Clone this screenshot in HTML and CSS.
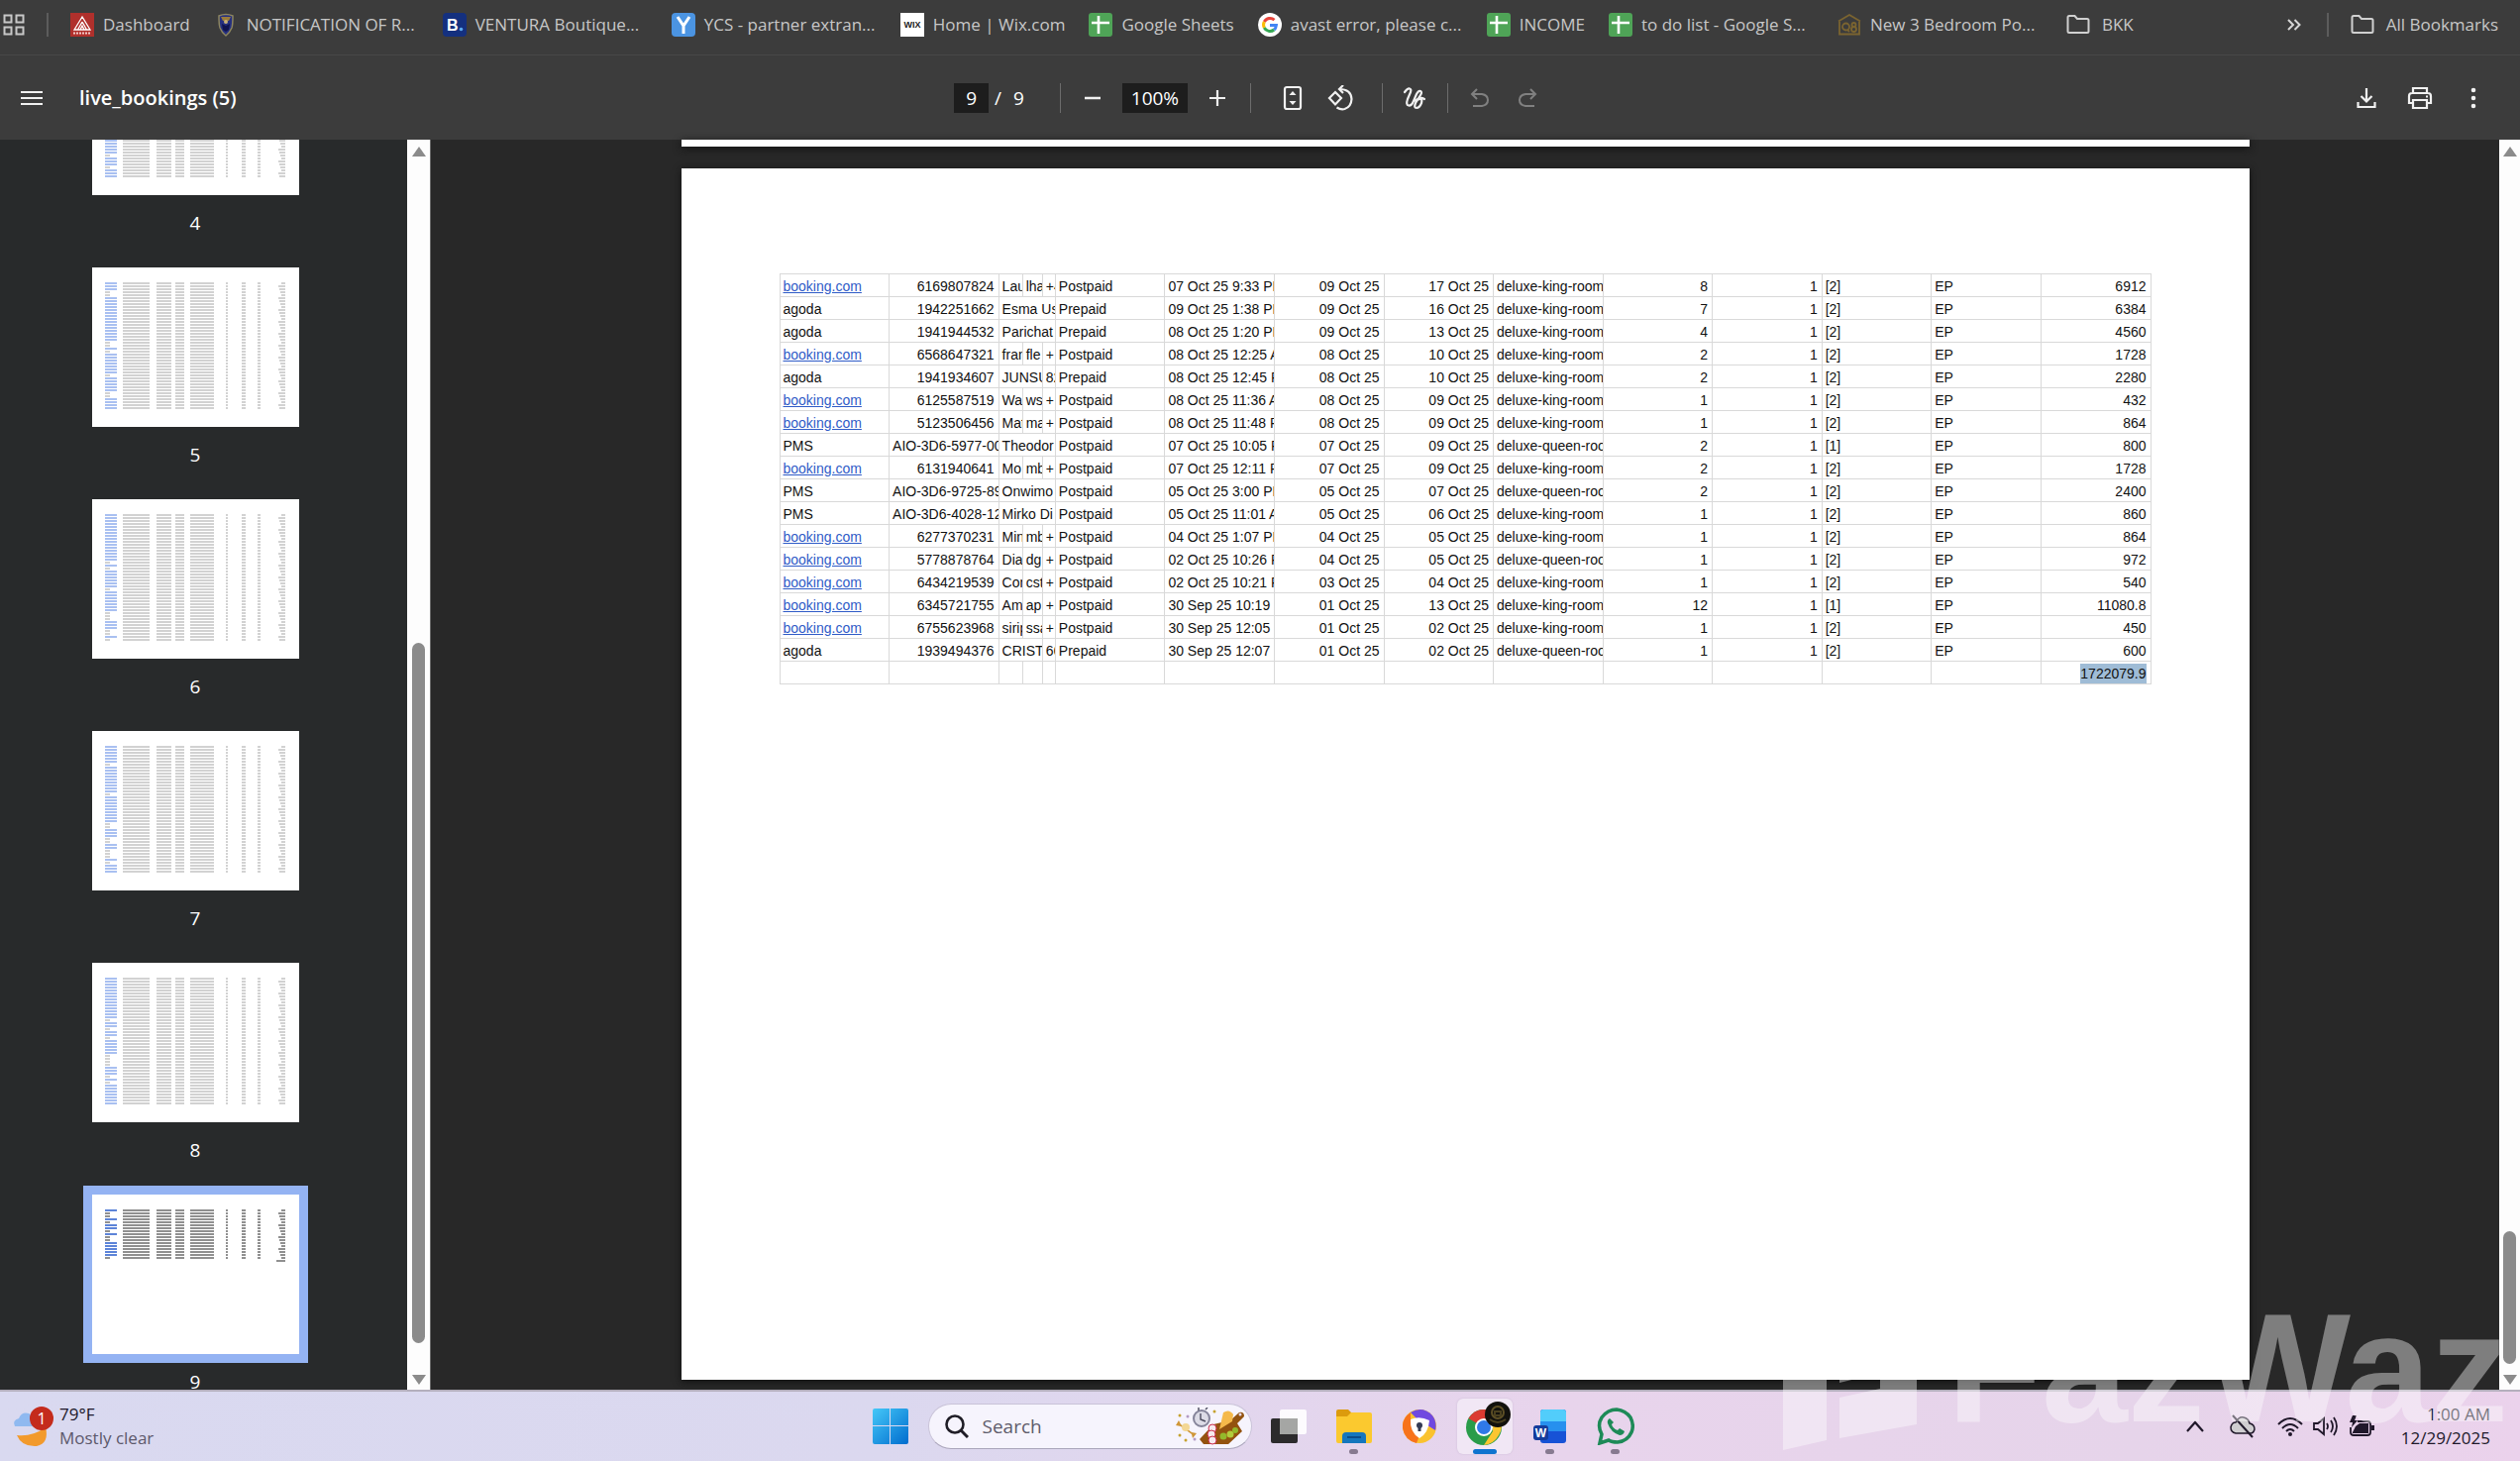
FILE: index.html
```html
<!DOCTYPE html>
<html lang="en">
<head>
    <meta charset="UTF-8">
    <meta name="viewport" content="width=device-width, initial-scale=1.0">
    <title>live_bookings (5)</title>
    <link rel="stylesheet" href="styles.css">
</head>
<body>
    <!-- shared icons -->
    <svg class="defs" aria-hidden="true">
        <symbol id="sheet" viewBox="0 0 24 24">
            <rect width="24" height="24" rx="3" fill="#4fa457"/>
            <path d="M3 10h18M10 3v18" stroke="#fff" stroke-width="2.6"/>
        </symbol>
        <symbol id="folder" viewBox="0 0 24 24">
            <path d="M1.500 18.500V4.500q0-1.500 1.500-1.500h5.500l2.500 3h10q1.500 0 1.500 1.500v11q0 1.500-1.500 1.500h-18q-1.500 0-1.500-1.500z" fill="none" stroke="#d0d0d0" stroke-width="2"/>
        </symbol>
    </svg>

    <nav class="bookmarks">
        <button class="icon-btn" aria-label="Apps">
            <svg width="22" height="24" viewBox="0 0 22 24"><path d="M1.500 2.500h7v7h-7zM13.500 2.500h7v7h-7zM1.500 14.500h7v7h-7zM13.500 14.500h7v7h-7z" fill="none" stroke="#c7c7c7" stroke-width="2"/></svg>
        </button>
        <span class="sep"></span>
        <div class="bookmark-list">
            <a href="#" class="bookmark">
                <svg width="24" height="24" viewBox="0 0 24 24"><rect width="24" height="24" fill="#b0302c"/><path d="M12 4L4 17h16zM12 9l-4.500 8M12 9l4.500 8M10 17l2-4 2 4" fill="none" stroke="#fff" stroke-width="1.300"/><path d="M3 20.500h18" stroke="#f3c9c7" stroke-width="2" stroke-dasharray="2 1"/></svg>
                <span>Dashboard</span>
            </a>
            <a href="#" class="bookmark wide">
                <svg width="24" height="24" viewBox="0 0 24 24"><path d="M5 3q7-3 14 0 0 9-1 12-2 5-6 8-4-3-6-8-1-3-1-12z" fill="#26307e" stroke="#8c8560" stroke-width="1.500"/><path d="M7 4h10l-2 4H9z" fill="#9a7b3c"/><path d="M8 11l4 2 4-2-1 6-3 2-3-2z" fill="#10144f"/><circle cx="12" cy="9" r="2" fill="#c8b27a"/></svg>
                <span>NOTIFICATION OF R...</span>
            </a>
            <a href="#" class="bookmark wide">
                <svg width="24" height="24" viewBox="0 0 24 24"><rect width="24" height="24" rx="4" fill="#14307f"/><text x="4" y="18" class="logo-b">B</text><circle cx="18.500" cy="16.500" r="1.800" fill="#5aa9ee"/></svg>
                <span>VENTURA Boutique...</span>
            </a>
            <a href="#" class="bookmark wide">
                <svg width="24" height="24" viewBox="0 0 24 24"><rect width="24" height="24" rx="4" fill="#4b94e2"/><path d="M6 4l6 9 6-9M12 13v8" fill="none" stroke="#fff" stroke-width="3"/></svg>
                <span>YCS - partner extran...</span>
            </a>
            <a href="#" class="bookmark">
                <svg width="24" height="24" viewBox="0 0 24 24"><rect width="24" height="24" fill="#fff"/><text x="12" y="15" text-anchor="middle" class="logo-wix">WIX</text></svg>
                <span>Home | Wix.com</span>
            </a>
            <a href="#" class="bookmark"><svg width="24" height="24"><use href="#sheet"/></svg><span>Google Sheets</span></a>
            <a href="#" class="bookmark wide">
                <svg width="24" height="24" viewBox="0 0 24 24" fill="none" stroke-width="3"><circle cx="12" cy="12" r="12" fill="#fff"/><path d="M16.500 7.200A6.500 6.500 0 0 0 6.300 9" stroke="#e8453c"/><path d="M6.300 9a6.500 6.500 0 0 0 0 6" stroke="#fbbc05"/><path d="M6.300 15a6.500 6.500 0 0 0 9.900 2" stroke="#34a853"/><path d="M16.200 17a6.500 6.500 0 0 0 2.200-4.500H12" stroke="#4285f4"/></svg>
                <span>avast error, please c...</span>
            </a>
            <a href="#" class="bookmark"><svg width="24" height="24"><use href="#sheet"/></svg><span>INCOME</span></a>
            <a href="#" class="bookmark wide"><svg width="24" height="24"><use href="#sheet"/></svg><span>to do list - Google S...</span></a>
            <a href="#" class="bookmark wide">
                <svg width="24" height="24" viewBox="0 0 24 24" fill="none" stroke="#7b6430" stroke-width="1.800"><path d="M1 8.500L12 2l11 6.500M2 9v12.500h20V9"/><circle cx="8.500" cy="14" r="3.500"/><path d="M10 17l2 2"/><circle cx="16.500" cy="12" r="2"/><circle cx="16.500" cy="16.500" r="2.500"/></svg>
                <span>New 3 Bedroom Po...</span>
            </a>
            <a href="#" class="bookmark"><svg width="24" height="24"><use href="#folder"/></svg><span class="folder-name">BKK</span></a>
        </div>
        <button class="icon-btn more" aria-label="More bookmarks">
            <svg width="14" height="14" viewBox="0 0 14 14"><path d="M1 2l5 5-5 5M7.500 2l5 5-5 5" fill="none" stroke="#d6d6d6" stroke-width="2"/></svg>
        </button>
        <span class="sep"></span>
        <a href="#" class="bookmark all"><svg width="24" height="24"><use href="#folder"/></svg><span>All Bookmarks</span></a>
    </nav>

    <header class="toolbar">
        <div class="file">
            <button class="icon-btn" aria-label="Menu">
                <svg width="22" height="16" viewBox="0 0 22 16"><path d="M0 2h22M0 8h22M0 14h22" stroke="#f1f1f1" stroke-width="2"/></svg>
            </button>
            <h1>live_bookings (5)</h1>
        </div>
        <div class="controls">
            <input class="field page-field" type="text" value="9" aria-label="Page number">
            <span class="slash">/</span>
            <span class="page-total">9</span>
            <span class="line"></span>
            <button class="tool" aria-label="Zoom out"><svg width="18" height="18" viewBox="0 0 18 18"><path d="M1 9h16" stroke="#f1f1f1" stroke-width="2.500"/></svg></button>
            <input class="field zoom-field" type="text" value="100%" aria-label="Zoom level">
            <button class="tool" aria-label="Zoom in"><svg width="18" height="18" viewBox="0 0 18 18"><path d="M1 9h16M9 1v16" stroke="#f1f1f1" stroke-width="2.200"/></svg></button>
            <span class="line"></span>
            <span class="view-tools">
                <button class="tool" aria-label="Fit to page"><svg width="20" height="26" viewBox="0 0 20 26"><rect x="2" y="2" width="16" height="22" rx="2" fill="none" stroke="#f1f1f1" stroke-width="2.200"/><path d="M6.500 10h7L10 6zM6.500 16h7L10 20z" fill="#f1f1f1"/></svg></button>
                <button class="tool" aria-label="Rotate"><svg width="26" height="26" viewBox="0 0 26 26" fill="none" stroke="#f1f1f1" stroke-width="2.200"><path d="M8 7l6 6-6 6.500L2 13z"/><path d="M12 4q12 0 12.500 10-.500 8-7 10-4 1-8-1.500"/><path d="M16 0l-4 4 4 4"/></svg></button>
            </span>
            <span class="line"></span>
            <button class="tool" aria-label="Draw"><svg width="24" height="24" viewBox="0 0 24 24"><path d="M2 6q3-4 5-3.500T8 6L5 13q-2 6 1 6.500T11 15l3-7q2-4 4-3t0 4l-5 8q-2 5 1 5t5-5q1-4-1-4t-5 2q4-5 9-2" fill="none" stroke="#f1f1f1" stroke-width="2.200" stroke-linecap="round" stroke-linejoin="round"/></svg></button>
            <span class="line"></span>
            <button class="tool" aria-label="Undo" disabled><svg width="20" height="20" viewBox="0 0 20 20"><path d="M3 18h9q6-1 6-6t-6-6H2M7 1L2 6l5 5" fill="none" stroke="#808080" stroke-width="2"/></svg></button>
            <button class="tool" aria-label="Redo" disabled><svg width="20" height="20" viewBox="0 0 20 20"><path d="M17 18H8q-6-1-6-6t6-6h10M13 1l5 5-5 5" fill="none" stroke="#808080" stroke-width="2"/></svg></button>
        </div>
        <div class="actions">
            <button class="tool" aria-label="Download"><svg width="20" height="22" viewBox="0 0 20 22"><path d="M10 1v13M4.500 9l5.500 5.500L15.500 9M1.500 15v5h17v-5" fill="none" stroke="#f1f1f1" stroke-width="2.200"/></svg></button>
            <button class="tool" aria-label="Print"><svg width="26" height="24" viewBox="0 0 26 24" fill="none" stroke="#f1f1f1" stroke-width="2.200"><path d="M6 7V2h14v5M6 17H2v-7q0-3 3-3h16q3 0 3 3v7h-4"/><path d="M6 14h14v8H6z"/><path d="M19 10.500h2"/></svg></button>
            <button class="tool" aria-label="More actions"><svg width="6" height="22" viewBox="0 0 6 22" fill="#f1f1f1"><circle cx="3" cy="3" r="2.300"/><circle cx="3" cy="11" r="2.300"/><circle cx="3" cy="19" r="2.300"/></svg></button>
        </div>
    </header>

    <main class="viewer">
        <aside class="sidebar" id="thumbs"></aside>
        <div class="scrollbar side-scroll">
            <span class="arrow up"></span>
            <span class="track"><span class="handle"></span></span>
            <span class="arrow down"></span>
        </div>
        <section class="pages">
            <div class="page previous"></div>
            <div class="page">
                <table class="bookings">
                    <colgroup>
                        <col class="c-std"><col class="c-std"><col class="c-name"><col class="c-mail"><col class="c-phone">
                        <col class="c-std"><col class="c-std"><col class="c-std"><col class="c-std"><col class="c-std">
                        <col class="c-std"><col class="c-std"><col class="c-std"><col class="c-std"><col class="c-std">
                    </colgroup>
                    <tbody id="rows"></tbody>
                </table>
            </div>
        </section>
        <div class="scrollbar page-scroll">
            <span class="arrow up"></span>
            <span class="track"><span class="handle"></span></span>
            <span class="arrow down"></span>
        </div>
    </main>

    <footer class="taskbar">
        <button class="weather">
            <svg width="44" height="44" viewBox="0 0 44 44">
                <path d="M5 31q15 2 29-8 4 16-9 19-15 1-20-11z" fill="#f29a2c"/>
                <path d="M3 22q-3-6 4-8 3-7 10-5 5 2 5 7l3 6z" fill="#8fb9f0"/>
                <circle cx="30" cy="14" r="12" fill="#c42b1c"/>
                <text x="30" y="20" text-anchor="middle" class="badge-num">1</text>
            </svg>
            <span class="weather-text"><span class="temp">79°F</span><span class="sky">Mostly clear</span></span>
        </button>

        <div class="apps">
            <button class="app" aria-label="Start">
                <svg width="36" height="36" viewBox="0 0 36 36"><defs><linearGradient id="win" x1="0" y1="0" x2="1" y2="1"><stop offset="0" stop-color="#45c8f8"/><stop offset="1" stop-color="#006cce"/></linearGradient></defs><path d="M2 0h15v17H0V2q0-2 2-2zM18 0h16q2 0 2 2v15H18zM0 18h17v18H2q-2 0-2-2zM18 18h18v16q0 2-2 2H18z" fill="url(#win)"/></svg>
            </button>
            <label class="search">
                <svg width="24" height="24" viewBox="0 0 24 24"><circle cx="10" cy="10" r="8.500" fill="none" stroke="#1f1d26" stroke-width="2.600"/><path d="M16 16l7 7" stroke="#1f1d26" stroke-width="3"/></svg>
                <input type="text" placeholder="Search" aria-label="Search">
                <svg width="72" height="38" viewBox="0 0 72 38">
                    <path d="M25 32l14-15 17-4 9-8q5-1 5 4l-7 7 5 8-14 13H29z" fill="#93530f"/>
                    <circle cx="66" cy="7" r="1.500" fill="#e6dcf0"/>
                    <path d="M45 22l4-17q6-4 10 2l-1 7z" fill="#f5b94a"/>
                    <circle cx="27" cy="11" r="8" fill="#dcdbe6" stroke="#85849a" stroke-width="2"/><path d="M26 6v6l5 2M24 0v3M31 2l2-2" fill="none" stroke="#4c4b5e" stroke-width="1.400"/>
                    <circle cx="38" cy="21" r="4" fill="#f6e9ee" stroke="#cc2e4c"/><circle cx="37" cy="27" r="4" fill="#f6e9ee" stroke="#cc2e4c"/><circle cx="38" cy="33" r="4" fill="#f6e9ee" stroke="#cc2e4c"/>
                    <circle cx="49" cy="29" r="3.500" fill="#93b92b"/><circle cx="56" cy="27" r="3.500" fill="#b2cc3c"/><circle cx="61" cy="23" r="3" fill="#93b92b"/>
                    <path d="M4 13l-3 5 5 1 11 8 1 4 4-5-5-1-11-8z" fill="#cf9637"/><circle cx="11" cy="20" r="4" fill="#f3d795"/>
                    <g fill="#c5a22f"><circle cx="5" cy="8" r="1.500"/><circle cx="40" cy="4" r="1.500"/><circle cx="5" cy="28" r="1.500"/><circle cx="11" cy="33" r="1.500"/></g>
                    <g fill="#b39ac4"><circle cx="13" cy="9" r="1.500"/><circle cx="20" cy="32" r="1.500"/></g>
                </svg>
            </label>
            <div class="app-list">
                <button class="app" aria-label="Task view">
                    <svg width="36" height="36" viewBox="0 0 36 36"><rect y="10" width="27" height="25" rx="2" fill="#2c2b2c"/><rect x="9" y="1" width="27" height="25" rx="2" fill="#fff" opacity=".9"/><path d="M9 10h18v16H9z" fill="#a5a6a4"/></svg>
                </button>
                <button class="app open" aria-label="File Explorer">
                    <svg width="38" height="36" viewBox="0 0 38 36"><path d="M1 6V3q0-2 2-2h10l4 4v6H1z" fill="#dc9b0d"/><path d="M1 8h11l4-4h19q2 0 2 2v27q0 2-2 2H3q-2 0-2-2z" fill="#fbc92f"/><path d="M7 35V28q0-4 4-4h16q4 0 4 4v7z" fill="#1576bd"/><path d="M12 29h14" stroke="#0a4c8a" stroke-width="2"/></svg>
                </button>
                <button class="app" aria-label="Secure Browser">
                    <svg width="34" height="34" viewBox="0 0 34 34"><circle cx="17" cy="17" r="17" fill="#fac22e"/><path d="M8 3Q20-4 30 6q5 7 3 15L14 9z" fill="#7049e0"/><path d="M8 3Q-1 9 0 19q2 12 14 15l2-5L8 9z" fill="#f7731c"/><path d="M17 29Q7 23 8 10q9-4 19 1-1 13-10 18z" fill="#fff"/><circle cx="17" cy="16" r="3" fill="#343b55"/><path d="M17 16v6" stroke="#343b55" stroke-width="3"/></svg>
                </button>
                <button class="app open active" aria-label="Google Chrome">
                    <svg width="50" height="46" viewBox="0 0 50 46"><circle cx="22" cy="26" r="18" fill="#2a9c4a"/><path d="M22 26L6.500 17Q12 8 22 8q11 0 16 9z" fill="#db3a31"/><path d="M22 44l9-14-1-13h8q4 9-1 17-5 9-15 10z" fill="#fbc631"/><circle cx="22" cy="26" r="9" fill="#fff"/><circle cx="22" cy="26" r="7" fill="#3079e8"/><circle cx="36" cy="13" r="13" fill="#12110d"/><circle cx="36" cy="11" r="6" fill="none" stroke="#5d4f25" stroke-width="2"/><path d="M28 18q8 6 16 0M33 10h6v4h-6z" fill="none" stroke="#4a401f" stroke-width="2"/></svg>
                </button>
                <button class="app open" aria-label="Word">
                    <svg width="34" height="36" viewBox="0 0 34 36"><rect x="7" y="1" width="26" height="34" rx="3" fill="#1752d6"/><path d="M10 1h20q3 0 3 3v9H7V4q0-3 3-3z" fill="#52cdfb"/><path d="M7 13h26v10H7z" fill="#2790ee"/><rect y="17" width="15" height="15" rx="3" fill="#153c9b"/><text x="7.500" y="29" text-anchor="middle" class="logo-w">W</text></svg>
                </button>
                <button class="app open" aria-label="WhatsApp">
                    <svg width="38" height="38" viewBox="0 0 38 38"><path d="M3 36l2-9Q0 18 5 10q6-8 15-8 9 1 14 8 4 8 1 15-4 9-14 10-6 0-9-2z" fill="none" stroke="#1d8a57" stroke-width="3.500"/><path d="M13 11q-3 2-2 5 3 9 12 12 4 0 5-4l-5-3-2 2q-5-2-6-6l2-2z" fill="#1d8a57"/></svg>
                </button>
            </div>
        </div>

        <div class="tray">
            <button class="tray-btn" aria-label="Show hidden icons"><svg width="18" height="12" viewBox="0 0 18 12"><path d="M1 11l8-9 8 9" fill="none" stroke="#20182a" stroke-width="2.200"/></svg></button>
            <button class="tray-btn cloud" aria-label="OneDrive"><svg width="26" height="24" viewBox="0 0 26 24"><path d="M6 19q-5-1-5-6 1-5 5-5 3-6 8-5 5 1 6 6 5 1 5 6-1 4-4 4z" fill="#cfcdd0" stroke="#20182a" stroke-width="1.500"/><path d="M3 1l20 22" stroke="#20182a" stroke-width="2"/></svg></button>
            <button class="system" aria-label="Network, volume and battery">
                <svg width="26" height="22" viewBox="0 0 26 22" fill="none" stroke="#20182a" stroke-width="2"><path d="M1 9q12-12 24 0M5 13q8-8 16 0M9 16q4-4 8 0"/><circle cx="13" cy="19" r="2" fill="#20182a" stroke="none"/></svg>
                <svg width="26" height="22" viewBox="0 0 26 22" fill="none" stroke="#20182a" stroke-width="1.800"><path d="M1 8h4l6-5v16l-6-5H1zM14 8q2 3 0 6M18 5q4 6 0 12M21 2q6 9 0 18"/></svg>
                <svg width="26" height="22" viewBox="0 0 26 22"><path d="M9 6h10q3 0 3 3v8q0 3-3 3H5q-3 0-3-3v-5" fill="none" stroke="#20182a" stroke-width="1.800"/><path d="M4 17l3-6 4-3h9v10H4zM23 10h3v5h-3zM4 0l4 0-2 5h3l-6 7 1-5H1z" fill="#20182a"/></svg>
            </button>
            <button class="clock"><span>1:00 AM</span><span>12/29/2025</span></button>
        </div>
    </footer>

    <div class="watermark">
        <svg width="136" height="138" viewBox="0 0 136 138" fill="#fff"><path d="M0 10L44 0v127L0 137zM57 0h78v111l-78 14V84l41-9V59l-41 10z"/></svg>
        <span>FazWaz</span>
    </div>

    <script src="script.js"></script>
</body>
</html>
```

FILE: styles.css
```css
* {
    box-sizing: border-box;
}
body {
    margin: 0;
    height: 100vh;
    display: flex;
    flex-direction: column;
    overflow: hidden;
    position: relative;
    background: #282828;
    font-family: "Open Sans", "Noto Sans", sans-serif;
    font-size: 17px;
    color: #fff;
}
button, input {
    font: inherit;
    color: inherit;
    background: none;
    border: none;
    padding: 0;
    margin: 0;
}
svg {
    display: block;
    flex: none;
}
a {
    color: inherit;
    text-decoration: none;
}
.defs {
    display: none;
}

/* bookmarks bar */
.bookmarks {
    display: flex;
    align-items: center;
    gap: 22px;
    height: 56px;
    padding: 0 22px 6px 3px;
    background: #3c3c3c;
    border-bottom: 1px solid #484848;
    color: #c7c7c7;
    flex: none;
}
.icon-btn {
    display: flex;
    cursor: pointer;
}
.sep {
    width: 2px;
    height: 24px;
    background: #5c5c5c;
    flex: none;
}
.bookmark-list {
    display: flex;
    gap: 24px;
    flex: 1;
    min-width: 0;
}
.bookmark {
    display: flex;
    align-items: center;
    gap: 9px;
    white-space: nowrap;
    flex: none;
}
.wide {
    width: 207px;
}
.more {
    margin-right: 4px;
}
.all {
    gap: 12px;
}
.folder-name {
    padding-left: 3px;
}
.logo-b {
    font: bold 16px "Liberation Sans", sans-serif;
    fill: #fff;
}
.logo-wix {
    font: bold 9px "Liberation Sans", sans-serif;
    fill: #222;
}
.logo-w {
    font: bold 12px "Liberation Sans", sans-serif;
    fill: #fff;
}

/* pdf toolbar */
.toolbar {
    display: grid;
    grid-template-columns: 1fr auto 1fr;
    align-items: center;
    height: 85px;
    padding-right: 20px;
    background: #3c3c3c;
    flex: none;
}
.file {
    display: flex;
    align-items: center;
    gap: 37px;
    padding-left: 21px;
}
h1 {
    margin: 0;
    font-size: 20px;
    font-weight: 600;
}
.controls {
    display: flex;
    align-items: center;
    font-size: 19px;
}
.field {
    height: 30px;
    background: #1d1d1d;
    text-align: center;
}
.page-field {
    width: 35px;
}
.zoom-field {
    width: 66px;
    margin: 0 11px;
}
.slash {
    padding: 0 12px 0 6px;
}
.page-total {
    padding-right: 36px;
}
.line {
    width: 1px;
    height: 30px;
    background: #6c6c6c;
}
.tool {
    display: flex;
    align-items: center;
    justify-content: center;
    min-width: 38px;
    height: 36px;
    cursor: pointer;
}
.line + .tool {
    margin-left: 13px;
}
.tool + .tool {
    margin-left: 10px;
}
.tool + .line {
    margin-left: 14px;
}
.view-tools {
    display: flex;
    padding: 0 23px;
}
.actions {
    display: flex;
    justify-content: flex-end;
    padding-right: 10px;
}
.actions .tool {
    min-width: 34px;
    margin-left: 20px;
}

/* viewer */
.viewer {
    display: flex;
    flex: 1;
    min-height: 0;
}
.sidebar {
    width: 411px;
    padding-right: 17px;
    display: flex;
    flex-direction: column;
    align-items: center;
    justify-content: flex-end;
    gap: 37px;
    overflow: hidden;
    background: #282a2b;
    flex: none;
}
.thumb {
    display: block;
    width: 209px;
    font-size: 19px;
    line-height: 16px;
    flex: none;
}
.thumb svg {
    background: #fff;
    margin-bottom: 20px;
}
.thumb.current svg {
    outline: 9px solid #94b3f3;
}
.scrollbar {
    display: flex;
    flex-direction: column;
    align-items: center;
    justify-content: space-between;
    padding: 7px 0 5px;
    background: #fdfdfd;
    flex: none;
}
.side-scroll {
    width: 24px;
    border-right: 1px solid #6a6a6a;
}
.page-scroll {
    width: 21px;
}
.arrow {
    border: 7px solid transparent;
}
.up {
    border-top: none;
    border-bottom: 10px solid #8b8b8b;
}
.down {
    border-bottom: none;
    border-top: 10px solid #8b8b8b;
}
.track {
    flex: 1;
    display: flex;
    flex-direction: column;
    justify-content: flex-end;
    padding-bottom: 11px;
}
.side-scroll .track {
    padding-bottom: 32px;
}
.handle {
    width: 13px;
    height: 11%;
    border-radius: 7px;
    background: #8b8b8b;
}
.side-scroll .handle {
    height: 59%;
}
.pages {
    flex: 1;
    min-width: 0;
    display: flex;
    flex-direction: column;
    align-items: center;
    gap: 22px;
    padding-bottom: 10px;
    background: #282828;
}
.page {
    width: 100%;
    max-width: 1583px;
    padding: 106px 99px 0;
    flex: 1;
    background: #fff;
    box-shadow: 0 2px 8px #111;
}
.previous {
    height: 7px;
    padding: 0;
    flex: none;
}

/* bookings table */
.bookings {
    width: 1385px;
    table-layout: fixed;
    border-collapse: collapse;
    font-family: "Liberation Sans", Arial, sans-serif;
    font-size: 14px;
    line-height: 20px;
    color: #111;
}
.c-std {
    width: 110px;
}
.c-name {
    width: 24px;
}
.c-mail {
    width: 20px;
}
.c-phone {
    width: 13px;
}
.bookings td {
    height: 23px;
    padding: 2px 0 0 3px;
    border: 1px solid #d9d9d9;
    overflow: hidden;
    white-space: nowrap;
}
.bookings .num {
    padding: 2px 4px 0 0;
    text-align: right;
}
.bookings a {
    color: #2f5bc7;
    text-decoration: underline;
}
.bookings mark {
    display: inline-block;
    background: #9fbcd6;
    color: inherit;
}

/* taskbar */
.taskbar {
    display: grid;
    grid-template-columns: 1fr auto 1fr;
    align-items: center;
    height: 72px;
    padding-right: 15px;
    border-top: 2px solid #b4afbd;
    background: linear-gradient(to right, #d9d9f0, #dbd8ef 35%, #e8d4ec 62%, #e6d4ea 85%, #ebd2ec);
    color: #20182a;
    flex: none;
}
.weather {
    display: flex;
    align-items: center;
    gap: 4px;
    padding-left: 12px;
    text-align: left;
}
.weather-text, .clock {
    display: flex;
    flex-direction: column;
    line-height: 24px;
}
.sky {
    color: #5c586b;
}
.badge-num {
    font-size: 16px;
    fill: #fff;
}
.apps, .app-list {
    display: flex;
    align-items: center;
}
.app {
    width: 66px;
    height: 70px;
    display: flex;
    align-items: center;
    justify-content: center;
    position: relative;
}
.open::after {
    content: "";
    position: absolute;
    bottom: 7px;
    width: 9px;
    height: 5px;
    border-radius: 3px;
    background: #877a90;
}
.active {
    width: 56px;
    height: 56px;
    margin: 0 5px;
    border-radius: 6px;
    background: #f1e7f5;
    box-shadow: 0 0 2px #c9b9d3;
}
.active svg {
    margin: -4px -4px 0 0;
}
.active::after {
    bottom: 0;
    width: 24px;
    background: #0f74cf;
}
.search {
    display: flex;
    align-items: center;
    width: 327px;
    height: 46px;
    margin: 0 4px 0 5px;
    padding: 0 5px 0 16px;
    border: 1px solid #c9c3d8;
    border-bottom-color: #aaa5bb;
    border-radius: 23px;
    background: #f6f4fd;
    font-size: 19px;
}
.search input {
    flex: 1;
    min-width: 0;
    padding-left: 14px;
}
.search input::placeholder {
    color: #5f5c6b;
    opacity: 1;
}
.tray {
    display: flex;
    align-items: center;
    justify-content: flex-end;
    padding-right: 15px;
}
.cloud {
    margin: 0 22px 0 26px;
}
.system {
    display: flex;
    gap: 10px;
}
.clock {
    width: 117px;
    text-align: right;
}

/* translucent brand mark over the lower right corner */
.watermark {
    position: absolute;
    right: 12px;
    bottom: 10px;
    display: flex;
    align-items: flex-start;
    gap: 30px;
    opacity: .4;
    pointer-events: none;
    font: bold 156px/108px "Liberation Sans", sans-serif;
}
```

FILE: script.js
```javascript
// source, id, guest cells, payment, booked, check-in, check-out, room, nights, guests, amount
const bookings = [
    ["booking.com", "6169807824", ["Lau", "lha", "+4"], "Postpaid", "07 Oct 25 9:33 PM", "09 Oct 25", "17 Oct 25", "king", 8, "[2]", "6912"],
    ["agoda", "1942251662", ["Esma Us"], "Prepaid", "09 Oct 25 1:38 PM", "09 Oct 25", "16 Oct 25", "king", 7, "[2]", "6384"],
    ["agoda", "1941944532", ["Parichat"], "Prepaid", "08 Oct 25 1:20 PM", "09 Oct 25", "13 Oct 25", "king", 4, "[2]", "4560"],
    ["booking.com", "6568647321", ["fran", "fle", "+"], "Postpaid", "08 Oct 25 12:25 AM", "08 Oct 25", "10 Oct 25", "king", 2, "[2]", "1728"],
    ["agoda", "1941934607", ["JUNSU", "82"], "Prepaid", "08 Oct 25 12:45 PM", "08 Oct 25", "10 Oct 25", "king", 2, "[2]", "2280"],
    ["booking.com", "6125587519", ["Wa", "ws", "+"], "Postpaid", "08 Oct 25 11:36 AM", "08 Oct 25", "09 Oct 25", "king", 1, "[2]", "432"],
    ["booking.com", "5123506456", ["Mat", "ma", "+"], "Postpaid", "08 Oct 25 11:48 PM", "08 Oct 25", "09 Oct 25", "king", 1, "[2]", "864"],
    ["PMS", "AIO-3D6-5977-00", ["Theodor"], "Postpaid", "07 Oct 25 10:05 PM", "07 Oct 25", "09 Oct 25", "queen", 2, "[1]", "800"],
    ["booking.com", "6131940641", ["Mo", "mb", "+"], "Postpaid", "07 Oct 25 12:11 PM", "07 Oct 25", "09 Oct 25", "king", 2, "[2]", "1728"],
    ["PMS", "AIO-3D6-9725-89", ["Onwimo"], "Postpaid", "05 Oct 25 3:00 PM", "05 Oct 25", "07 Oct 25", "queen", 2, "[2]", "2400"],
    ["PMS", "AIO-3D6-4028-12", ["Mirko Di"], "Postpaid", "05 Oct 25 11:01 AM", "05 Oct 25", "06 Oct 25", "king", 1, "[2]", "860"],
    ["booking.com", "6277370231", ["Min", "mb", "+"], "Postpaid", "04 Oct 25 1:07 PM", "04 Oct 25", "05 Oct 25", "king", 1, "[2]", "864"],
    ["booking.com", "5778878764", ["Dia", "dg", "+"], "Postpaid", "02 Oct 25 10:26 PM", "04 Oct 25", "05 Oct 25", "queen", 1, "[2]", "972"],
    ["booking.com", "6434219539", ["Con", "cst", "+"], "Postpaid", "02 Oct 25 10:21 PM", "03 Oct 25", "04 Oct 25", "king", 1, "[2]", "540"],
    ["booking.com", "6345721755", ["Am", "ap", "+"], "Postpaid", "30 Sep 25 10:19", "01 Oct 25", "13 Oct 25", "king", 12, "[1]", "11080.8"],
    ["booking.com", "6755623968", ["sirip", "ssa", "+"], "Postpaid", "30 Sep 25 12:05", "01 Oct 25", "02 Oct 25", "king", 1, "[2]", "450"],
    ["agoda", "1939494376", ["CRIST", "66"], "Prepaid", "30 Sep 25 12:07", "01 Oct 25", "02 Oct 25", "queen", 1, "[2]", "600"]
];

// long guest names run over the empty cells next to them
const spans = { 1: [3], 2: [2, 1], 3: [1, 1, 1] };

const td = (text, num) => `<td${num ? ' class="num"' : ""}>${text}</td>`;

const rows = bookings.map(([source, id, guest, pay, booked, from, to, room, nights, guests, amount]) => {
    const name = source === "booking.com" ? `<a href="#">${source}</a>` : source;
    const people = guest.map((text, i) => `<td colspan="${spans[guest.length][i]}">${text}</td>`).join("");
    return "<tr>" + td(name) + td(id, !id.startsWith("AIO")) + people + td(pay) + td(booked) +
        td(from, true) + td(to, true) + td(`deluxe-${room}-room`) + td(nights, true) + td(1, true) +
        td(guests) + td("EP") + td(amount, true) + "</tr>";
});
rows.push("<tr>" + td("").repeat(14) + td("<mark>1722079.9</mark>", true) + "</tr>");
document.getElementById("rows").innerHTML = rows.join("");

// thumbnails: x and width of each text column, rows are 3px apart
const columns = [[31, 27], [65, 15], [84, 9], [99, 24], [135, 2], [151, 4], [167, 3]];
const thumbs = [
    { page: 4, count: 43, plain: [29, 35, 39] },
    { page: 5, count: 43, plain: [3, 4, 20, 21, 23, 31, 37, 38] },
    { page: 6, count: 43, plain: [16, 18, 25, 33, 34, 35, 39, 40, 42] },
    { page: 7, count: 43, plain: [6, 16, 26, 27, 31, 32, 35, 36, 37, 39] },
    { page: 8, count: 43, plain: [14, 17, 20, 26, 27, 28, 29, 33, 35] },
    { page: 9, count: 17, plain: [1, 2, 4, 7, 9, 10, 16] }
];

function drawThumb({ page, count, plain }) {
    const current = page === 9;
    const grey = current ? "#909090" : "#d2d2d2";
    const blue = current ? "#5d84d8" : "#a9c0f1";
    let links = "", text = "";
    for (let i = 0; i < count; i++) {
        const y = 16 + i * 3;
        if (plain.includes(i)) text += `M13 ${y}h5`;
        else links += `M13 ${y}h12`;
        columns.forEach(([x, w]) => text += `M${x} ${y}h${w}`);
        const w = 4 + (i * 7) % 4;
        text += `M${195 - w} ${y}h${w}`;
    }
    if (current) text += "M186 67h9";
    return `<button class="thumb${current ? " current" : ""}">
        <svg width="209" height="161" viewBox="0 0 209 161" fill="none">
            <path d="${links}" stroke="${blue}" stroke-width="2"/>
            <path d="${text}" stroke="${grey}" stroke-width="2"/>
        </svg>${page}</button>`;
}
document.getElementById("thumbs").innerHTML = thumbs.map(drawThumb).join("");
```
